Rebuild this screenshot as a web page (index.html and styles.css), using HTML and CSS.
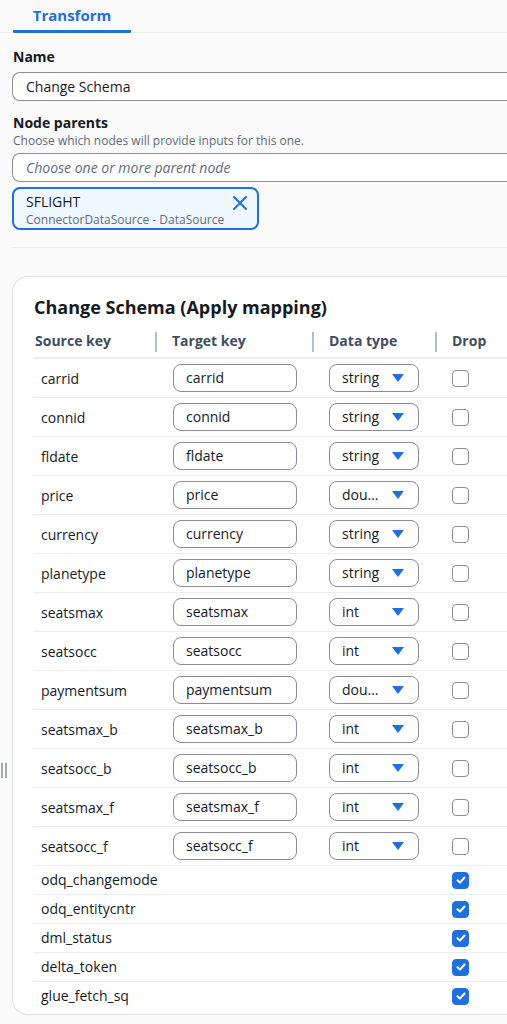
FILE: index.html
```html
<!DOCTYPE html>
<html>
<head>
<meta charset="utf-8">
<link rel="stylesheet" href="styles.css">
</head>
<body>
<div class="page">
  <div class="tabs">
    <div class="tab active">Transform</div>
  </div>

  <div class="field name-field">
    <div class="label">Name</div>
    <div class="input">Change Schema</div>
  </div>

  <div class="field parents-field">
    <div class="label">Node parents</div>
    <div class="desc">Choose which nodes will provide inputs for this one.</div>
    <div class="input placeholder">Choose one or more parent node</div>
    <div class="token">
      <div class="token-text">
        <div class="token-title">SFLIGHT</div>
        <div class="token-sub">ConnectorDataSource - DataSource</div>
      </div>
      <svg class="token-x" width="16" height="16" viewBox="0 0 16 16"><path d="M2 2 L14 14 M14 2 L2 14" stroke="#1f6fdc" stroke-width="2" stroke-linecap="round" fill="none"/></svg>
    </div>
  </div>

  <div class="divider"></div>

  <div class="card">
    <h2 class="card-title">Change Schema (Apply mapping)</h2>
    <div class="table">
      <div class="row head">
        <div class="cell c1">Source key</div>
        <div class="cell c2"><span class="sep"></span>Target key</div>
        <div class="cell c3"><span class="sep"></span>Data type</div>
        <div class="cell c4"><span class="sep"></span>Drop</div>
      </div>

      <div class="row"><div class="cell c1">carrid</div><div class="cell c2"><div class="tinput">carrid</div></div><div class="cell c3"><div class="select">string<span class="caret"></span></div></div><div class="cell c4"><span class="cb"></span></div></div>
      <div class="row"><div class="cell c1">connid</div><div class="cell c2"><div class="tinput">connid</div></div><div class="cell c3"><div class="select">string<span class="caret"></span></div></div><div class="cell c4"><span class="cb"></span></div></div>
      <div class="row"><div class="cell c1">fldate</div><div class="cell c2"><div class="tinput">fldate</div></div><div class="cell c3"><div class="select">string<span class="caret"></span></div></div><div class="cell c4"><span class="cb"></span></div></div>
      <div class="row"><div class="cell c1">price</div><div class="cell c2"><div class="tinput">price</div></div><div class="cell c3"><div class="select">dou…<span class="caret"></span></div></div><div class="cell c4"><span class="cb"></span></div></div>
      <div class="row"><div class="cell c1">currency</div><div class="cell c2"><div class="tinput">currency</div></div><div class="cell c3"><div class="select">string<span class="caret"></span></div></div><div class="cell c4"><span class="cb"></span></div></div>
      <div class="row"><div class="cell c1">planetype</div><div class="cell c2"><div class="tinput">planetype</div></div><div class="cell c3"><div class="select">string<span class="caret"></span></div></div><div class="cell c4"><span class="cb"></span></div></div>
      <div class="row"><div class="cell c1">seatsmax</div><div class="cell c2"><div class="tinput">seatsmax</div></div><div class="cell c3"><div class="select">int<span class="caret"></span></div></div><div class="cell c4"><span class="cb"></span></div></div>
      <div class="row"><div class="cell c1">seatsocc</div><div class="cell c2"><div class="tinput">seatsocc</div></div><div class="cell c3"><div class="select">int<span class="caret"></span></div></div><div class="cell c4"><span class="cb"></span></div></div>
      <div class="row"><div class="cell c1">paymentsum</div><div class="cell c2"><div class="tinput">paymentsum</div></div><div class="cell c3"><div class="select">dou…<span class="caret"></span></div></div><div class="cell c4"><span class="cb"></span></div></div>
      <div class="row"><div class="cell c1">seatsmax_b</div><div class="cell c2"><div class="tinput">seatsmax_b</div></div><div class="cell c3"><div class="select">int<span class="caret"></span></div></div><div class="cell c4"><span class="cb"></span></div></div>
      <div class="row"><div class="cell c1">seatsocc_b</div><div class="cell c2"><div class="tinput">seatsocc_b</div></div><div class="cell c3"><div class="select">int<span class="caret"></span></div></div><div class="cell c4"><span class="cb"></span></div></div>
      <div class="row"><div class="cell c1">seatsmax_f</div><div class="cell c2"><div class="tinput">seatsmax_f</div></div><div class="cell c3"><div class="select">int<span class="caret"></span></div></div><div class="cell c4"><span class="cb"></span></div></div>
      <div class="row"><div class="cell c1">seatsocc_f</div><div class="cell c2"><div class="tinput">seatsocc_f</div></div><div class="cell c3"><div class="select">int<span class="caret"></span></div></div><div class="cell c4"><span class="cb"></span></div></div>

      <div class="row short"><div class="cell c1 wide">odq_changemode</div><div class="cell c4"><span class="cb on"><svg width="16" height="16" viewBox="0 0 16 16"><path d="M4.5 8.2 L7 10.6 L11.5 5.5" stroke="#fff" stroke-width="2" fill="none" stroke-linecap="round" stroke-linejoin="round"/></svg></span></div></div>
      <div class="row short"><div class="cell c1 wide">odq_entitycntr</div><div class="cell c4"><span class="cb on"><svg width="16" height="16" viewBox="0 0 16 16"><path d="M4.5 8.2 L7 10.6 L11.5 5.5" stroke="#fff" stroke-width="2" fill="none" stroke-linecap="round" stroke-linejoin="round"/></svg></span></div></div>
      <div class="row short"><div class="cell c1 wide">dml_status</div><div class="cell c4"><span class="cb on"><svg width="16" height="16" viewBox="0 0 16 16"><path d="M4.5 8.2 L7 10.6 L11.5 5.5" stroke="#fff" stroke-width="2" fill="none" stroke-linecap="round" stroke-linejoin="round"/></svg></span></div></div>
      <div class="row short"><div class="cell c1 wide">delta_token</div><div class="cell c4"><span class="cb on"><svg width="16" height="16" viewBox="0 0 16 16"><path d="M4.5 8.2 L7 10.6 L11.5 5.5" stroke="#fff" stroke-width="2" fill="none" stroke-linecap="round" stroke-linejoin="round"/></svg></span></div></div>
      <div class="row short last"><div class="cell c1 wide">glue_fetch_sq</div><div class="cell c4"><span class="cb on"><svg width="16" height="16" viewBox="0 0 16 16"><path d="M4.5 8.2 L7 10.6 L11.5 5.5" stroke="#fff" stroke-width="2" fill="none" stroke-linecap="round" stroke-linejoin="round"/></svg></span></div></div>
    </div>
  </div>

  <div class="handle"><span></span><span></span></div>
</div>
</body>
</html>
```

FILE: styles.css
```css
* { box-sizing: border-box; }
html, body {
  margin: 0;
  padding: 0;
  background: #fafafa;
  overflow: hidden;
}
body {
  font-family: "Open Sans", "Noto Sans", sans-serif;
  color: #16191f;
  font-size: 14px;
}
.page {
  position: relative;
  width: 507px;
  padding-left: 12px;
}
.tabs {
  height: 33px;
  border-bottom: 1px solid #e9ebed;
  display: flex;
  margin-left: -12px;
  padding-left: 13px;
}
.tab {
  width: 118px;
  text-align: center;
  font-weight: 700;
  font-size: 15px;
  color: #1f6fdc;
  border-bottom: 3px solid #1f6fdc;
  border-radius: 0 0 1px 1px;
  height: 33px;
  margin-bottom: -1px;
  line-height: 31px;
}
.field { display: flex; flex-direction: column; }
.name-field { padding-top: 15px; }
.parents-field { padding-top: 13px; }
.label {
  font-weight: 700;
  font-size: 14px;
  line-height: 18px;
  padding-left: 1px;
}
.desc {
  font-size: 12px;
  color: #5f6b7a;
  line-height: 16px;
  padding-left: 1px;
  margin-top: 1px;
}
.name-field .input { margin-top: 6px; }
.parents-field .input { margin-top: 4px; }
.input {
  height: 29px;
  background: #fff;
  border: 1px solid #8c8c94;
  border-right: none;
  border-radius: 8px 0 0 8px;
  padding-left: 13px;
  line-height: 27px;
  font-size: 14px;
}
.input.placeholder {
  font-style: italic;
  color: #5f6b7a;
}
.token {
  margin-top: 5px;
  width: 247px;
  height: 43px;
  background: #f0f8ff;
  border: 2px solid #1f6fdc;
  border-radius: 8px;
  display: flex;
  justify-content: space-between;
  padding: 4px 9px 0 12px;
}
.token-title {
  font-size: 14px;
  line-height: 18px;
}
.token-sub {
  font-size: 12px;
  color: #5f6b7a;
  line-height: 16px;
  margin-top: 1px;
}
.token-x { margin-top: 2px; }
.divider {
  margin-top: 17px;
  height: 1px;
  background: #e9ebed;
}
.card {
  margin-top: 28px;
  background: #fff;
  border: 1px solid #dfe1e5;
  border-right: none;
  border-radius: 16px 0 0 16px;
  padding: 18px 0 4px 20px;
}
.card-title {
  margin: 0 0 0 1px;
  font-size: 18px;
  font-weight: 700;
  line-height: 24px;
}
.table { margin-top: 13px; }
.row {
  display: grid;
  grid-template-columns: 122px 157px 123px 1fr;
  align-items: center;
  height: 39px;
  border-bottom: 1px solid #ebecef;
}
.row.head {
  height: 27px;
  border-bottom: 2px solid #e9ebed;
  align-items: start;
  font-weight: 700;
  color: #414d5c;
}
.row.head .cell { position: relative; padding-left: 17px; line-height: 18px; }
.row.head .c1 { padding-left: 2px; }
.sep {
  position: absolute;
  left: 0;
  top: 0;
  width: 2px;
  height: 20px;
  background: #b6bec9;
}
.cell { padding-left: 18px; }
.c3, .c4 { padding-left: 17px; }
.c1 { padding-left: 8px; }
.row.short { height: 29px; grid-template-columns: 402px 1fr; }
.row.short .c1 { line-height: 18px; }
.row.last { border-bottom: none; height: 28px; }
.tinput {
  width: 124px;
  height: 28px;
  border: 1px solid #8c8c94;
  border-radius: 8px;
  padding-left: 12px;
  line-height: 26px;
  background: #fff;
}
.select {
  width: 90px;
  height: 28px;
  border: 1px solid #8c8c94;
  border-radius: 8px;
  padding: 0 14px 0 12px;
  line-height: 26px;
  display: flex;
  justify-content: space-between;
  align-items: center;
}
.caret {
  width: 0;
  height: 0;
  border-left: 6px solid transparent;
  border-right: 6px solid transparent;
  border-top: 8px solid #1f6fdc;
}
.cb {
  display: block;
  width: 17px;
  height: 17px;
  border: 1.5px solid #8c8c94;
  border-radius: 4px;
  background: #fff;
}
.cb.on {
  background: #1f6fdc;
  border-color: #1f6fdc;
  display: flex;
  align-items: center;
  justify-content: center;
}
.cb.on svg { flex: none; }
.handle {
  position: absolute;
  left: 1px;
  top: 763px;
  display: flex;
  gap: 2px;
}
.handle span {
  width: 2px;
  height: 15px;
  background: #a4a9b0;
}
```
